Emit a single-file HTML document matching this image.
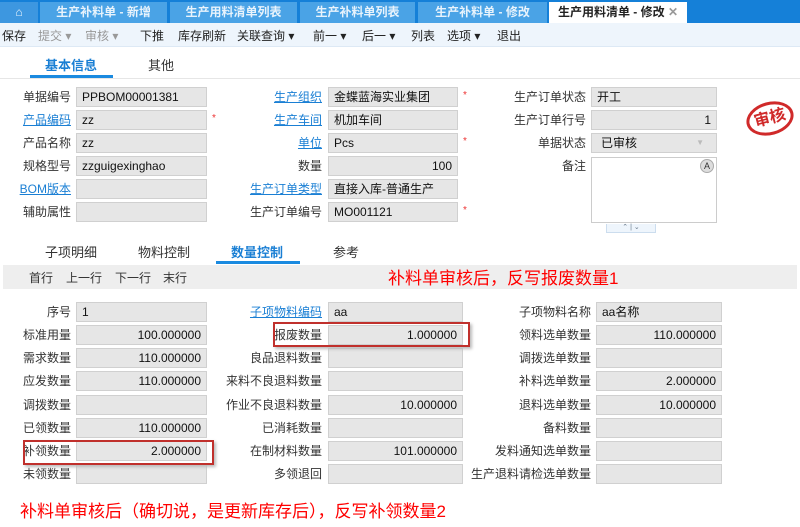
<!DOCTYPE html><html><head><meta charset="utf-8"><style>
*{margin:0;padding:0;box-sizing:border-box}
body{width:800px;height:527px;overflow:hidden;background:#fff;font-family:"Liberation Sans","Noto Sans CJK SC",sans-serif;font-size:12px;color:#333;position:relative}
.a{position:absolute;white-space:nowrap}
.tabbar{position:absolute;left:0;top:0;width:800px;height:23px;background:#1580d8}
.tab{position:absolute;top:2px;height:21px;background:#4aa3e6;color:#e8f3fc;font-size:12px;line-height:21px;text-align:center;font-weight:bold}
.tb{position:absolute;left:0;top:23px;width:800px;height:24px;background:#eef5fc;border-bottom:1px solid #dde9f5}
.tb span{position:absolute;top:4px;font-size:12px;color:#222}
.g{color:#999!important}
.lbl{position:absolute;text-align:right;font-size:12px;color:#333;white-space:nowrap;height:20px;line-height:20px}
.lk{color:#1a7fd4;text-decoration:underline}
.in{position:absolute;height:20px;background:#e6e6e6;border:1px solid #d0d0d0;font-size:12px;line-height:18px;padding:0 5px;color:#111}
.r{text-align:right}
.st{position:absolute;color:#e33;font-size:10px}
.red{position:absolute;color:#f00;font-size:17px;white-space:nowrap}
.box{position:absolute;border:2px solid #c0302c;box-shadow:2px 2px 3px #bbb}
</style></head><body>
<div class="tabbar"></div>
<div class="tab" style="left:0;width:38px;background:#3d97e0">&#8962;</div>
<div class="tab" style="left:40px;width:127px">生产补料单 - 新增</div>
<div class="tab" style="left:170px;width:127px">生产用料清单列表</div>
<div class="tab" style="left:300px;width:115px">生产补料单列表</div>
<div class="tab" style="left:418px;width:129px">生产补料单 - 修改</div>
<div class="tab" style="left:549px;width:138px;background:#fff;color:#222">生产用料清单 - 修改 <span style="color:#999">✕</span></div>
<div class="tb">
<span style="left:2px">保存</span><span class="g" style="left:38px">提交 ▾</span><span class="g" style="left:85px">审核 ▾</span>
<span style="left:140px">下推</span><span style="left:178px">库存刷新</span><span style="left:237px">关联查询 ▾</span>
<span style="left:313px">前一 ▾</span><span style="left:362px">后一 ▾</span><span style="left:411px">列表</span><span style="left:447px">选项 ▾</span><span style="left:497px">退出</span>
</div>
<div class="a" style="left:45px;top:55px;font-size:13px;color:#1a7fd4;font-weight:bold">基本信息</div>
<div class="a" style="left:148px;top:55px;font-size:13px">其他</div>
<div class="a" style="left:30px;top:75px;width:83px;height:3px;background:#1a8ae0"></div>
<div class="a" style="left:0;top:78px;width:800px;height:1px;background:#e6e6e6"></div>

<div class="lbl" style="left:0;width:71px;top:87px">单据编号</div><div class="in" style="left:76px;top:87px;width:131px">PPBOM00001381</div>
<div class="lbl lk" style="left:0;width:71px;top:110px">产品编码</div><div class="in" style="left:76px;top:110px;width:131px">zz</div><div class="st" style="left:212px;top:113px">*</div>
<div class="lbl" style="left:0;width:71px;top:133px">产品名称</div><div class="in" style="left:76px;top:133px;width:131px">zz</div>
<div class="lbl" style="left:0;width:71px;top:156px">规格型号</div><div class="in" style="left:76px;top:156px;width:131px">zzguigexinghao</div>
<div class="lbl lk" style="left:0;width:71px;top:179px">BOM版本</div><div class="in" style="left:76px;top:179px;width:131px"></div>
<div class="lbl" style="left:0;width:71px;top:202px">辅助属性</div><div class="in" style="left:76px;top:202px;width:131px"></div>

<div class="lbl lk" style="left:200px;width:122px;top:87px">生产组织</div><div class="in" style="left:328px;top:87px;width:130px">金蝶蓝海实业集团</div><div class="st" style="left:463px;top:90px">*</div>
<div class="lbl lk" style="left:200px;width:122px;top:110px">生产车间</div><div class="in" style="left:328px;top:110px;width:130px">机加车间</div>
<div class="lbl lk" style="left:200px;width:122px;top:133px">单位</div><div class="in" style="left:328px;top:133px;width:130px">Pcs</div><div class="st" style="left:463px;top:136px">*</div>
<div class="lbl" style="left:200px;width:122px;top:156px">数量</div><div class="in r" style="left:328px;top:156px;width:130px">100</div>
<div class="lbl lk" style="left:200px;width:122px;top:179px">生产订单类型</div><div class="in" style="left:328px;top:179px;width:130px">直接入库-普通生产</div>
<div class="lbl" style="left:200px;width:122px;top:202px">生产订单编号</div><div class="in" style="left:328px;top:202px;width:130px">MO001121</div><div class="st" style="left:463px;top:205px">*</div>

<div class="lbl" style="left:480px;width:106px;top:87px">生产订单状态</div><div class="in" style="left:591px;top:87px;width:126px">开工</div>
<div class="lbl" style="left:480px;width:106px;top:110px">生产订单行号</div><div class="in r" style="left:591px;top:110px;width:126px">1</div>
<div class="lbl" style="left:480px;width:106px;top:133px">单据状态</div><div class="in" style="left:591px;top:133px;width:126px;padding-left:9px">已审核<span style="position:absolute;right:12px;color:#bbb;font-size:8px">▼</span></div>
<div class="lbl" style="left:480px;width:106px;top:156px">备注</div>
<div class="a" style="left:591px;top:157px;width:126px;height:66px;border:1px solid #ccc;background:#fff"></div>
<div class="a" style="left:700px;top:159px;width:14px;height:14px;border-radius:50%;background:#ddd;border:1px solid #aaa;font-size:9px;text-align:center;line-height:12px">A</div>
<div class="a" style="left:606px;top:224px;width:50px;height:9px;border:1px solid #cde;border-top:none;background:#eef5fc;font-size:7px;text-align:center;line-height:8px;color:#678">⌃ | ⌄</div>
<div class="a" style="left:746px;top:102px;width:48px;height:33px;border:3px solid #d02a2a;border-radius:50%;transform:rotate(-15deg);color:#d02a2a;font-weight:bold;font-size:16px;text-align:center;line-height:27px">审核</div>

<div class="a" style="left:45px;top:242px;font-size:13px">子项明细</div>
<div class="a" style="left:138px;top:242px;font-size:13px">物料控制</div>
<div class="a" style="left:231px;top:242px;font-size:13px;color:#1a7fd4;font-weight:bold">数量控制</div>
<div class="a" style="left:333px;top:242px;font-size:13px">参考</div>
<div class="a" style="left:216px;top:261px;width:84px;height:3px;background:#1a8ae0"></div>
<div class="a" style="left:3px;top:265px;width:794px;height:24px;background:#eeeeee"></div>
<div class="a" style="left:29px;top:269px">首行</div><div class="a" style="left:66px;top:269px">上一行</div><div class="a" style="left:115px;top:269px">下一行</div><div class="a" style="left:163px;top:269px">末行</div>
<div class="red" style="left:388px;top:264px">补料单审核后，反写报废数量1</div>

<div class="lbl" style="left:0;width:71px;top:302px">序号</div><div class="in" style="left:76px;top:302px;width:131px">1</div>
<div class="lbl" style="left:0;width:71px;top:325px">标准用量</div><div class="in r" style="left:76px;top:325px;width:131px">100.000000</div>
<div class="lbl" style="left:0;width:71px;top:348px">需求数量</div><div class="in r" style="left:76px;top:348px;width:131px">110.000000</div>
<div class="lbl" style="left:0;width:71px;top:371px">应发数量</div><div class="in r" style="left:76px;top:371px;width:131px">110.000000</div>
<div class="lbl" style="left:0;width:71px;top:395px">调拨数量</div><div class="in r" style="left:76px;top:395px;width:131px"></div>
<div class="lbl" style="left:0;width:71px;top:418px">已领数量</div><div class="in r" style="left:76px;top:418px;width:131px">110.000000</div>
<div class="lbl" style="left:0;width:71px;top:441px">补领数量</div><div class="in r" style="left:76px;top:441px;width:131px">2.000000</div>
<div class="lbl" style="left:0;width:71px;top:464px">未领数量</div><div class="in r" style="left:76px;top:464px;width:131px"></div>

<div class="lbl lk" style="left:200px;width:122px;top:302px">子项物料编码</div><div class="in" style="left:328px;top:302px;width:135px">aa</div>
<div class="lbl" style="left:200px;width:122px;top:325px">报废数量</div><div class="in r" style="left:328px;top:325px;width:135px">1.000000</div>
<div class="lbl" style="left:200px;width:122px;top:348px">良品退料数量</div><div class="in r" style="left:328px;top:348px;width:135px"></div>
<div class="lbl" style="left:200px;width:122px;top:371px">来料不良退料数量</div><div class="in r" style="left:328px;top:371px;width:135px"></div>
<div class="lbl" style="left:200px;width:122px;top:395px">作业不良退料数量</div><div class="in r" style="left:328px;top:395px;width:135px">10.000000</div>
<div class="lbl" style="left:200px;width:122px;top:418px">已消耗数量</div><div class="in r" style="left:328px;top:418px;width:135px"></div>
<div class="lbl" style="left:200px;width:122px;top:441px">在制材料数量</div><div class="in r" style="left:328px;top:441px;width:135px">101.000000</div>
<div class="lbl" style="left:200px;width:122px;top:464px">多领退回</div><div class="in r" style="left:328px;top:464px;width:135px"></div>

<div class="lbl" style="left:470px;width:121px;top:302px">子项物料名称</div><div class="in" style="left:596px;top:302px;width:126px">aa名称</div>
<div class="lbl" style="left:470px;width:121px;top:325px">领料选单数量</div><div class="in r" style="left:596px;top:325px;width:126px">110.000000</div>
<div class="lbl" style="left:470px;width:121px;top:348px">调拨选单数量</div><div class="in r" style="left:596px;top:348px;width:126px"></div>
<div class="lbl" style="left:470px;width:121px;top:371px">补料选单数量</div><div class="in r" style="left:596px;top:371px;width:126px">2.000000</div>
<div class="lbl" style="left:470px;width:121px;top:395px">退料选单数量</div><div class="in r" style="left:596px;top:395px;width:126px">10.000000</div>
<div class="lbl" style="left:470px;width:121px;top:418px">备料数量</div><div class="in r" style="left:596px;top:418px;width:126px"></div>
<div class="lbl" style="left:470px;width:121px;top:441px">发料通知选单数量</div><div class="in r" style="left:596px;top:441px;width:126px"></div>
<div class="lbl" style="left:470px;width:121px;top:464px">生产退料请检选单数量</div><div class="in r" style="left:596px;top:464px;width:126px"></div>

<div class="box" style="left:273px;top:322px;width:197px;height:25px"></div>
<div class="box" style="left:23px;top:440px;width:191px;height:25px"></div>
<div class="red" style="left:20px;top:497px">补料单审核后（确切说，是更新库存后），反写补领数量2</div>
</body></html>
